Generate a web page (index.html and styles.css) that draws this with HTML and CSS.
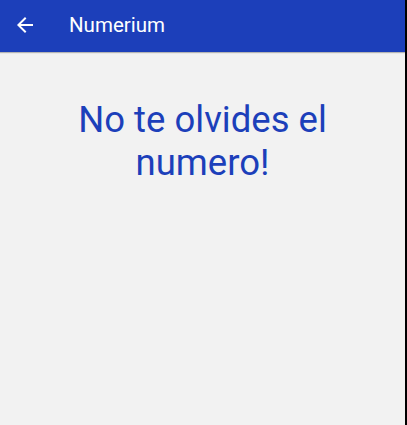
FILE: index.html
```html
<!DOCTYPE html>
<html lang="es">
<head>
<meta charset="utf-8">
<link rel="stylesheet" href="styles.css">
</head>
<body>
<div class="screen">
  <header class="appbar">
    <svg class="back" width="24" height="24" viewBox="0 0 24 24"><path d="M20 11H7.83l5.59-5.59L12 4l-8 8 8 8 1.41-1.41L7.83 13H20v-2z" fill="#fff"/></svg>
    <span class="title">Numerium</span>
  </header>
  <main class="content">
    <h1 class="message">No te olvides el numero!</h1>
  </main>
</div>
</body>
</html>
```
FILE: styles.css
```css
html, body {
  margin: 0;
  padding: 0;
  background: #000;
  height: 100%;
}
.screen {
  width: 405px;
  height: 425px;
  background: #f2f2f2;
  display: flex;
  flex-direction: column;
  font-family: Roboto, "Noto Sans", sans-serif;
}
.appbar {
  height: 52px;
  background: #1c3fba;
  display: flex;
  align-items: center;
  padding-left: 13px;
  box-shadow: 0 1px 1px rgba(0,0,0,0.25);
  position: relative;
  z-index: 1;
}
.back {
  display: block;
  margin-top: -2px;
}
.title {
  color: #fff;
  font-size: 20.5px;
  margin-left: 32px;
  margin-top: -2px;
}
.content {
  flex: 1;
  padding: 0 40px;
}
.message {
  margin: 46px 0 0;
  text-align: center;
  font-weight: 400;
  font-size: 36.5px;
  line-height: 43px;
  color: #1c3fba;
}
```
